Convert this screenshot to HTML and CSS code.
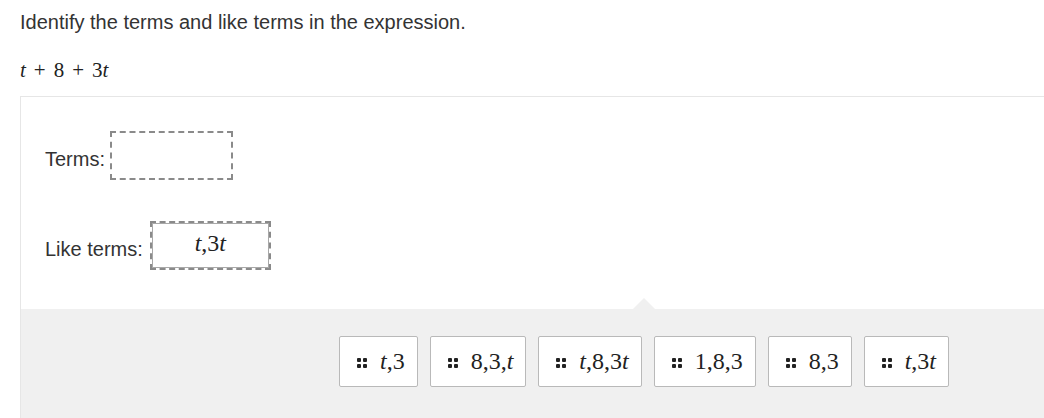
FILE: index.html
```html
<!DOCTYPE html>
<html>
<head>
<meta charset="utf-8">
<link rel="stylesheet" href="styles.css">
</head>
<body>
<p class="prompt">Identify the terms and like terms in the expression.</p>
<p class="expr"><i>t</i><span class="op">+</span>8<span class="op">+</span>3<i>t</i></p>
<div class="panel">
  <div class="answers">
    <div class="row">
      <span class="label">Terms:</span>
      <div class="drop drop-terms"></div>
    </div>
    <div class="row">
      <span class="label">Like terms:</span>
      <div class="drop drop-like">
        <div class="placed"><span class="m"><i>t</i>,3<i>t</i></span></div>
      </div>
    </div>
  </div>
  <div class="tray">
    <span class="notch"></span>
    <div class="chip"><span class="grip"><b></b><b></b><b></b><b></b></span><span class="m"><i>t</i>,3</span></div>
    <div class="chip"><span class="grip"><b></b><b></b><b></b><b></b></span><span class="m">8,3,<i>t</i></span></div>
    <div class="chip"><span class="grip"><b></b><b></b><b></b><b></b></span><span class="m"><i>t</i>,8,3<i>t</i></span></div>
    <div class="chip"><span class="grip"><b></b><b></b><b></b><b></b></span><span class="m">1,8,3</span></div>
    <div class="chip"><span class="grip"><b></b><b></b><b></b><b></b></span><span class="m">8,3</span></div>
    <div class="chip"><span class="grip"><b></b><b></b><b></b><b></b></span><span class="m"><i>t</i>,3<i>t</i></span></div>
  </div>
</div>
</body>
</html>
```

FILE: styles.css
```css
html, body {
  margin: 0;
  padding: 0;
  background: #fff;
  overflow: hidden;
}
body {
  font-family: "Liberation Sans", Arial, sans-serif;
  color: #333;
  width: 1044px;
  height: 418px;
}
.prompt {
  margin: 0;
  padding: 10px 0 0 20px;
  font-size: 20px;
  line-height: 24px;
}
.expr {
  margin: 0;
  padding: 23px 0 0 20px;
  height: 39px;
  box-sizing: content-box;
  font-family: "Liberation Serif", "Times New Roman", serif;
  font-size: 21px;
  line-height: 26px;
  color: #222;
}
.expr .op {
  margin: 0 8px;
}
.m {
  font-family: "Liberation Serif", "Times New Roman", serif;
  font-size: 24px;
  color: #222;
}
.panel {
  margin-left: 20px;
  width: 1246px;
  border: 1px solid #e6e6e6;
  border-right: none;
  border-bottom: none;
}
.answers {
  padding: 34px 0 39px 24px;
  display: flex;
  flex-direction: column;
  gap: 41px;
}
.row {
  display: flex;
  align-items: center;
  height: 49px;
}
.label {
  font-size: 20px;
  padding-top: 7px;
}
.drop {
  box-sizing: border-box;
  height: 49px;
  border: 2px dashed #8a8a8a;
}
.drop-terms {
  width: 123px;
  margin-left: 5px;
}
.drop-like {
  width: 121px;
  margin-left: 7px;
  display: flex;
}
.placed {
  flex: 1;
  border: 1px solid #a8a8a8;
  background: #fff;
  display: flex;
  align-items: center;
  justify-content: center;
  padding-bottom: 4px;
}
.tray {
  position: relative;
  background: #f0f0f0;
  height: 140px;
  display: flex;
  justify-content: center;
  align-items: flex-start;
  gap: 12px;
  padding-top: 27px;
  box-sizing: border-box;
}
.notch {
  position: absolute;
  left: 50%;
  top: -11px;
  margin-left: -11px;
  width: 0;
  height: 0;
  border-left: 11px solid transparent;
  border-right: 11px solid transparent;
  border-bottom: 11px solid #f0f0f0;
}
.chip {
  box-sizing: border-box;
  height: 51px;
  background: #fff;
  border: 1px solid #b9b9b9;
  border-radius: 2px;
  display: flex;
  align-items: center;
  padding: 0 12px 0 17px;
  gap: 13px;
}
.grip {
  display: grid;
  grid-template-columns: 4px 4px;
  grid-template-rows: 4px 4px;
  gap: 2px;
  margin-top: 3px;
}
.grip b {
  display: block;
  width: 4px;
  height: 4px;
  background: #222;
  border-radius: 1px;
}
```
